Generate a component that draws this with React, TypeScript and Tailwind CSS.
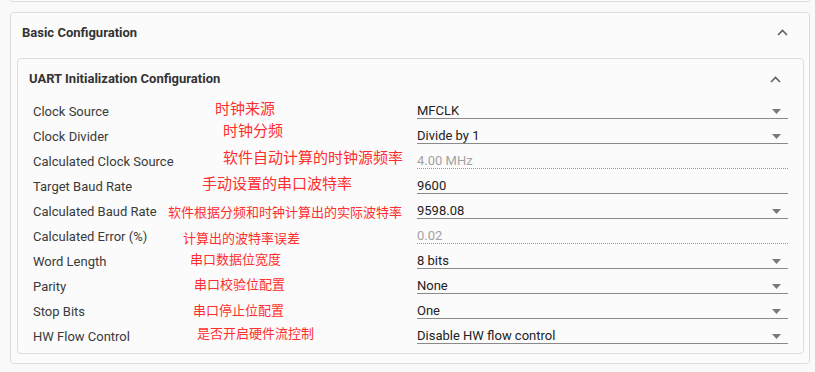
import React from "react";

type Row = { label: string; value: string; kind: "select" | "input" | "disabled" };

const rows: Row[] = [
  { label: "Clock Source", value: "MFCLK", kind: "select" },
  { label: "Clock Divider", value: "Divide by 1", kind: "select" },
  { label: "Calculated Clock Source", value: "4.00 MHz", kind: "disabled" },
  { label: "Target Baud Rate", value: "9600", kind: "input" },
  { label: "Calculated Baud Rate", value: "9598.08", kind: "select" },
  { label: "Calculated Error (%)", value: "0.02", kind: "disabled" },
  { label: "Word Length", value: "8 bits", kind: "select" },
  { label: "Parity", value: "None", kind: "select" },
  { label: "Stop Bits", value: "One", kind: "select" },
  { label: "HW Flow Control", value: "Disable HW flow control", kind: "select" },
];

type Note = { text: string; left: number; top: number; big: boolean };
const notes: Note[] = [
  { text: "时钟来源", left: 215, top: 100, big: true },
  { text: "时钟分频", left: 223, top: 122, big: true },
  { text: "软件自动计算的时钟源频率", left: 223, top: 148.5, big: true },
  { text: "手动设置的串口波特率", left: 202, top: 174.5, big: true },
  { text: "软件根据分频和时钟计算出的实际波特率", left: 168, top: 204.5, big: false },
  { text: "计算出的波特率误差", left: 183, top: 230.5, big: false },
  { text: "串口数据位宽度", left: 190, top: 251.5, big: false },
  { text: "串口校验位配置", left: 194, top: 276.5, big: false },
  { text: "串口停止位配置", left: 193, top: 302.5, big: false },
  { text: "是否开启硬件流控制", left: 197, top: 325.5, big: false },
];

function ChevronUp() {
  return (
    <svg width="11" height="7" viewBox="0 0 11 7" className="block">
      <path d="M1 6 L5.5 1.5 L10 6" fill="none" stroke="#616161" strokeWidth="1.6" />
    </svg>
  );
}

function Caret() {
  return (
    <svg width="9" height="5" viewBox="0 0 9 5" className="block">
      <path d="M0 0 L9 0 L4.5 5 Z" fill="#7a7a7a" />
    </svg>
  );
}

function Field({ row }: { row: Row }) {
  if (row.kind === "disabled") {
    return (
      <div className="mt-[5px] flex h-[15px] w-[371px] items-center border-b border-dotted border-[#9a9a9a]">
        <span className="text-[13px] leading-[14px] text-[#a3a3a3]">{row.value}</span>
      </div>
    );
  }
  return (
    <div className="mt-[5px] flex h-[15px] w-[371px] items-center justify-between border-b border-[#8a8a8a] pr-[7px]">
      <span className="text-[13px] leading-[14px] text-[#222]">{row.value}</span>
      {row.kind === "select" && <Caret />}
    </div>
  );
}

export default function App() {
  return (
    <div className="relative h-[372px] w-[815px] overflow-hidden bg-[#f9f9f9] pl-[10px] pr-[5px] font-['Roboto','Liberation_Sans',sans-serif]">
      <div className="h-[2px] rounded-b-[4px] border border-t-0 border-[#dddddd] bg-[#fbfbfb]" />
      <div className="mt-[10px] rounded-[4px] border border-[#dddddd] bg-[#fbfbfb] pb-[9px] pl-[6px] pr-[5px]">
        <div className="flex h-[39px] items-center justify-between pl-[5px] pr-[16px]">
          <span className="text-[13px] font-bold text-[#333]">Basic Configuration</span>
          <ChevronUp />
        </div>
        <div className="mt-[6px] rounded-[4px] border border-[#dddddd] bg-[#fbfbfb] pb-[4px]">
          <div className="flex h-[40px] items-center justify-between pl-[11px] pr-[22px]">
            <span className="text-[13px] font-bold text-[#333]">UART Initialization Configuration</span>
            <ChevronUp />
          </div>
          {rows.map((r) => (
            <div key={r.label} className="flex h-[25px] items-start pl-[15px]">
              <div className="w-[384px] text-[13px] leading-[25px] text-[#3a3a3a]">{r.label}</div>
              <Field row={r} />
            </div>
          ))}
        </div>
      </div>
      {notes.map((n) => (
        <div
          key={n.text}
          className={
            "absolute whitespace-nowrap font-['Noto_Sans_CJK_SC',sans-serif] leading-none text-[#ff2e2e] " +
            (n.big ? "text-[15px]" : "text-[13px]")
          }
          style={{ left: n.left, top: n.top }}
        >
          {n.text}
        </div>
      ))}
    </div>
  );
}
